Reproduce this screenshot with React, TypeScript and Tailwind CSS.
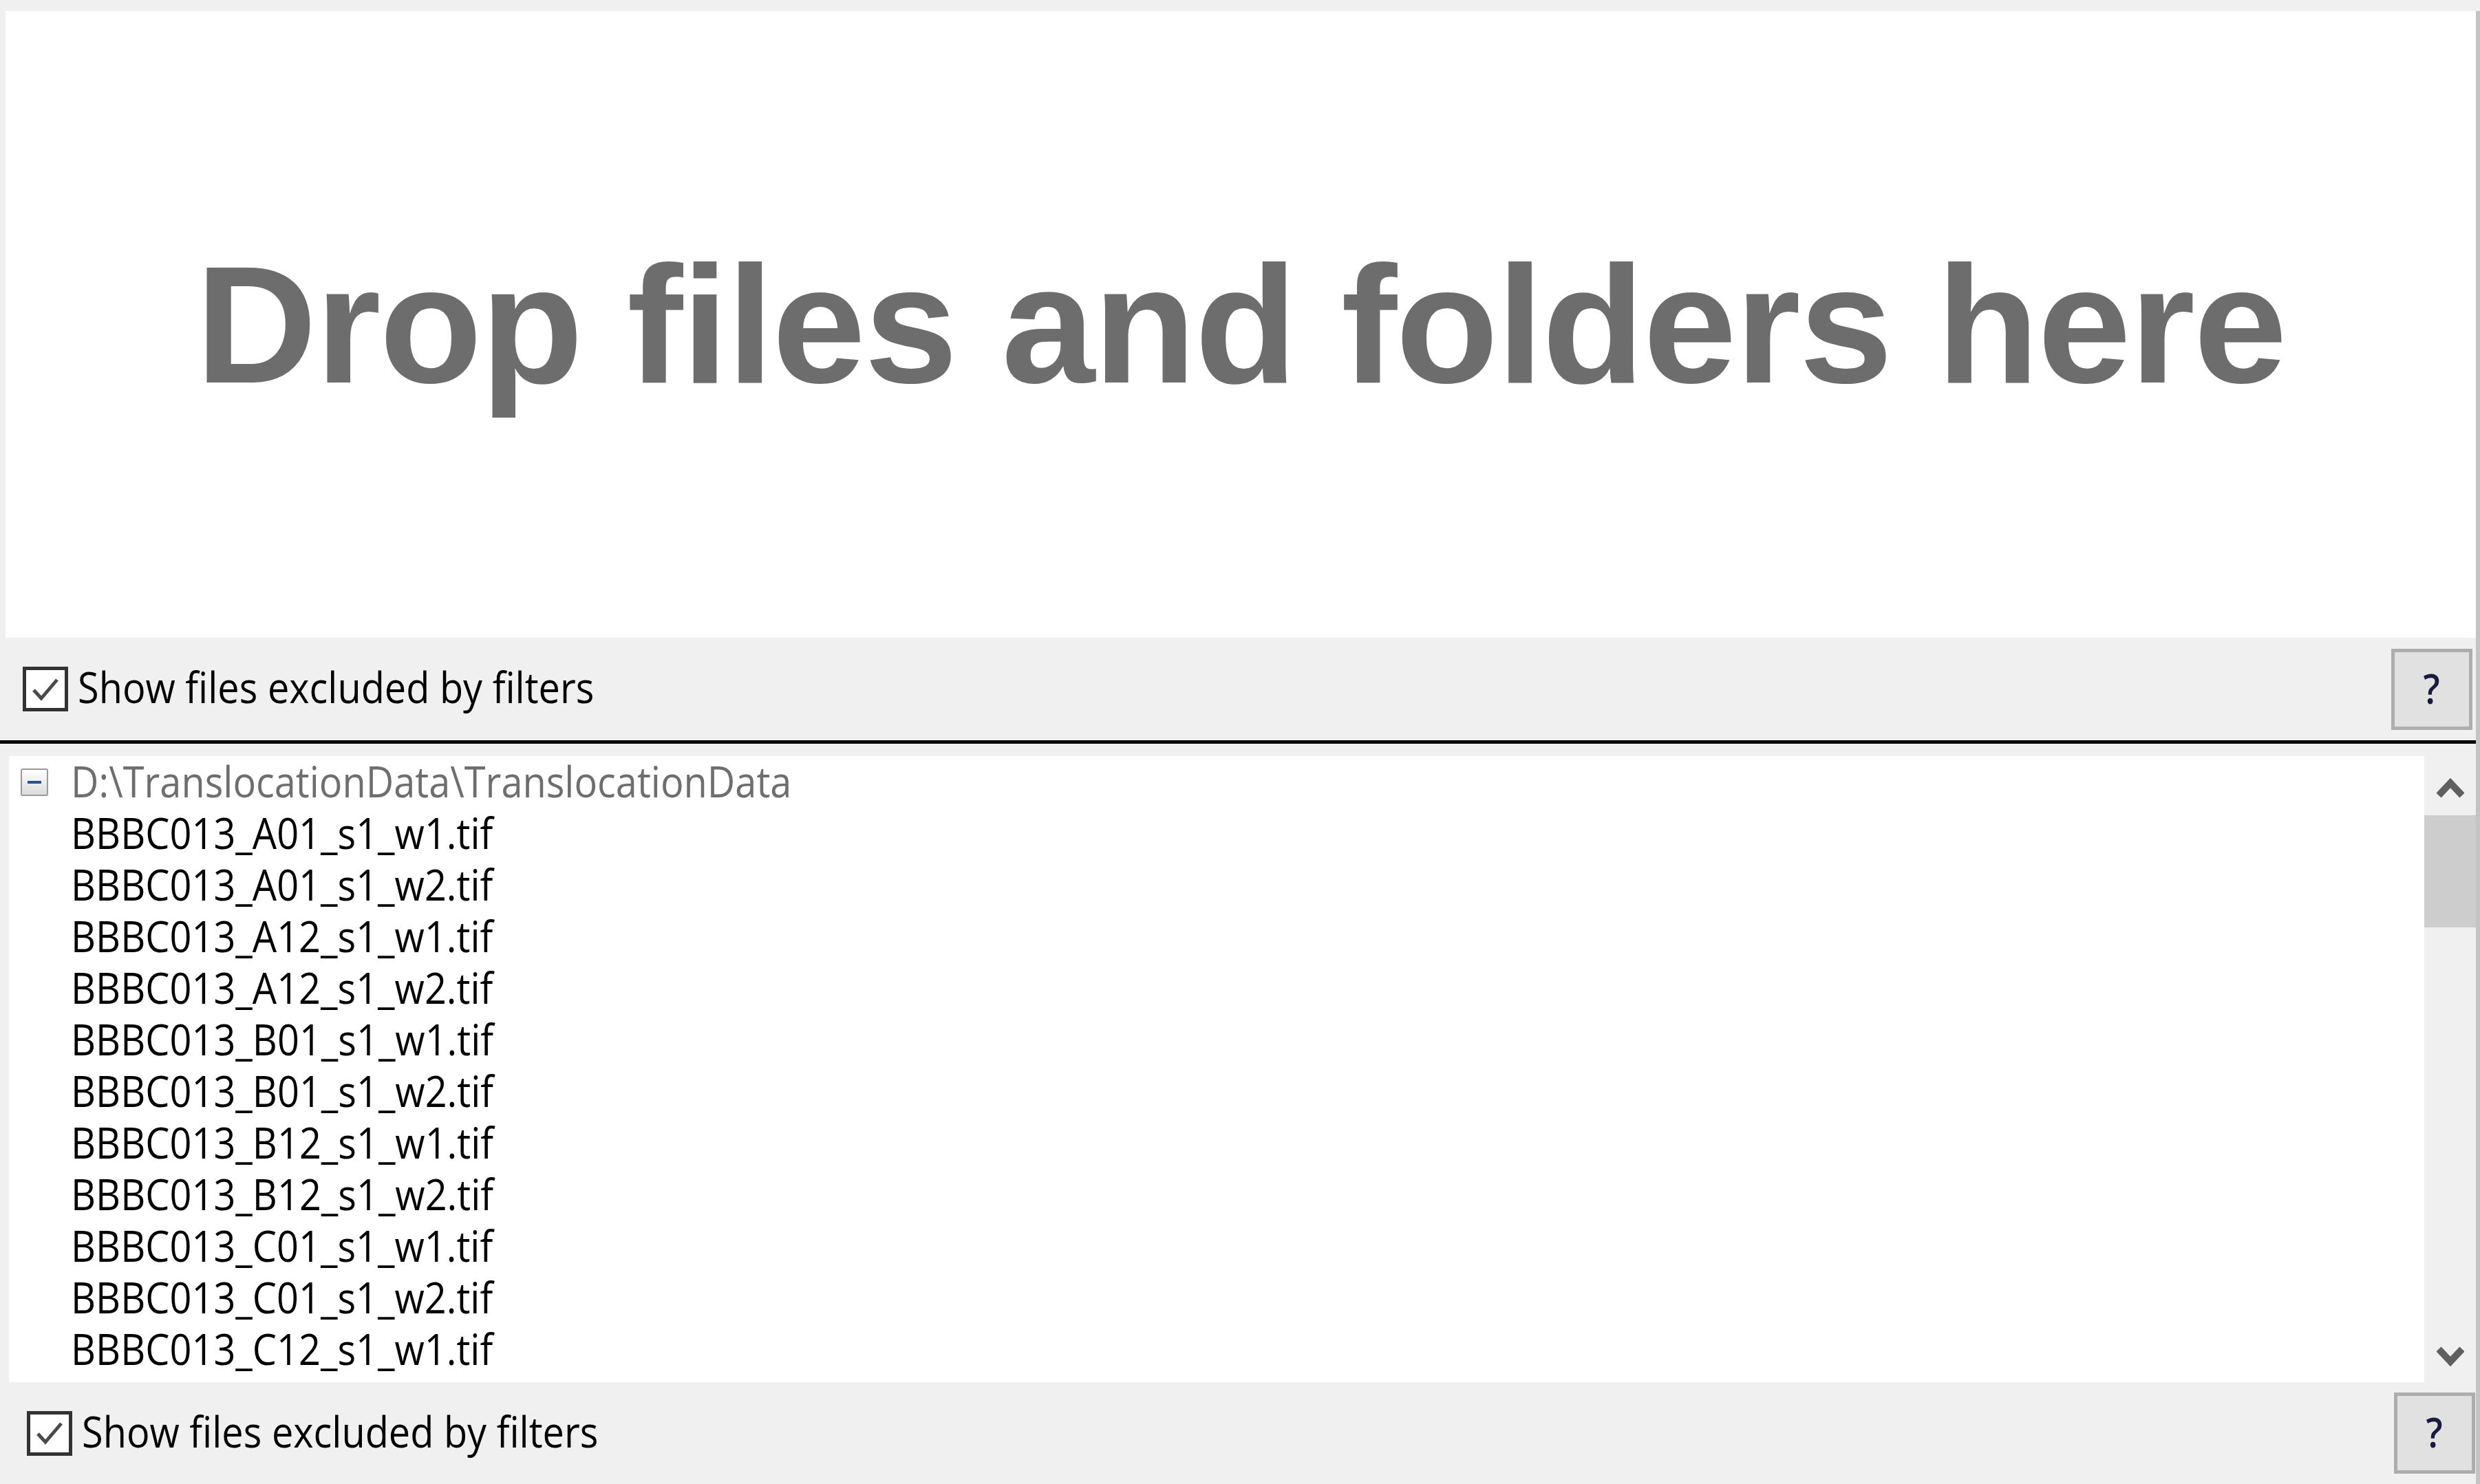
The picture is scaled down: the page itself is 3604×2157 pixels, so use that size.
import React from 'react'

const files = [
  'BBBC013_A01_s1_w1.tif',
  'BBBC013_A01_s1_w2.tif',
  'BBBC013_A12_s1_w1.tif',
  'BBBC013_A12_s1_w2.tif',
  'BBBC013_B01_s1_w1.tif',
  'BBBC013_B01_s1_w2.tif',
  'BBBC013_B12_s1_w1.tif',
  'BBBC013_B12_s1_w2.tif',
  'BBBC013_C01_s1_w1.tif',
  'BBBC013_C01_s1_w2.tif',
  'BBBC013_C12_s1_w1.tif',
]

function CheckBox() {
  return (
    <div className="w-[66px] h-[65px] shrink-0 border-[5px] border-[#333333] bg-white flex items-center justify-center">
      <svg width="48" height="46" viewBox="0 0 48 46">
        <polyline points="7,24 18,36 41,9" fill="none" stroke="#4a4a4a" strokeWidth="5" />
      </svg>
    </div>
  )
}

function HelpButton() {
  return (
    <div className="w-[118px] h-[118px] shrink-0 border-[5px] border-[#adadad] bg-[#e1e1e1] flex items-center justify-center">
      <span className="text-[60px] leading-none font-semibold text-[#1a1a40] font-['Open_Sans',sans-serif] scale-x-[0.887] -mt-[4px]">?</span>
    </div>
  )
}

function FilterRow({ boxPad, btnPad }: { boxPad: string; btnPad: string }) {
  return (
    <div className={`flex items-center h-full ${boxPad} ${btnPad}`}>
      <CheckBox />
      <span className="ml-[14px] mb-[8px] text-[63px] leading-[75px] text-black whitespace-nowrap font-['Open_Sans',sans-serif] scale-x-[0.887] origin-left">
        Show files excluded by filters
      </span>
      <div className="ml-auto">
        <HelpButton />
      </div>
    </div>
  )
}

function Chevron({ up }: { up?: boolean }) {
  return (
    <svg width="40" height="34" viewBox="0 0 40 34">
      <polyline
        points={up ? '3,28 20,10 37,28' : '3,6 20,24 37,6'}
        fill="none"
        stroke="#606060"
        strokeWidth="10"
      />
    </svg>
  )
}

export default function App() {
  return (
    <div className="w-[3604px] h-[2157px] bg-[#f0f0f0] flex overflow-hidden">
      <div className="flex-1 flex flex-col min-w-0">
        {/* drop target */}
        <div className="mt-[16px] ml-[8px] h-[911px] bg-white flex items-center justify-center">
          <span className="font-['Liberation_Sans',Arial,sans-serif] font-bold text-[244px] leading-none tracking-[-2px] text-[#6d6d6d] whitespace-nowrap">
            Drop files and folders here
          </span>
        </div>

        <div className="h-[149px]">
          <FilterRow boxPad="pl-[33px]" btnPad="pr-[5px]" />
        </div>

        <div className="h-[5px] bg-black" />

        {/* file list */}
        <div className="mt-[18px] ml-[13px] h-[910px] flex">
          <div className="flex-1 bg-white overflow-hidden font-['Open_Sans',sans-serif] text-[63px]">
            <div className="flex h-[75px] items-center">
              <div className="w-[90px] shrink-0 pl-[17px] flex items-center">
                <div className="w-[40px] h-[40px] border-2 border-[#9a9a9a] rounded-[3px] bg-gradient-to-b from-white to-[#dcdcdc] flex items-center justify-center">
                  <div className="w-[20px] h-[4px] bg-[#2d4f8c]" />
                </div>
              </div>
              <span className="mb-[4px] leading-[75px] text-[#6e6e6e] whitespace-nowrap scale-x-[0.887] origin-left">
                D:\TranslocationData\TranslocationData
              </span>
            </div>
            {files.map(f => (
              <div key={f} className="flex h-[75px] items-center">
                <div className="w-[90px] shrink-0" />
                <span className="mb-[4px] leading-[75px] text-black whitespace-nowrap scale-x-[0.887] origin-left">{f}</span>
              </div>
            ))}
          </div>

          {/* scrollbar */}
          <div className="w-[75px] shrink-0 flex flex-col">
            <div className="h-[86px] pt-[6px] flex items-center justify-center">
              <Chevron up />
            </div>
            <div className="h-[163px] bg-[#cdcdcd]" />
            <div className="flex-1" />
            <div className="h-[75px] flex items-center justify-center">
              <Chevron />
            </div>
          </div>
        </div>

        <div className="h-[148px]">
          <FilterRow boxPad="pl-[39px]" btnPad="pr-[1px]" />
        </div>
      </div>
      <div className="w-[6px] shrink-0 mt-[16px] bg-[#c4c4c4]" />
    </div>
  )
}
